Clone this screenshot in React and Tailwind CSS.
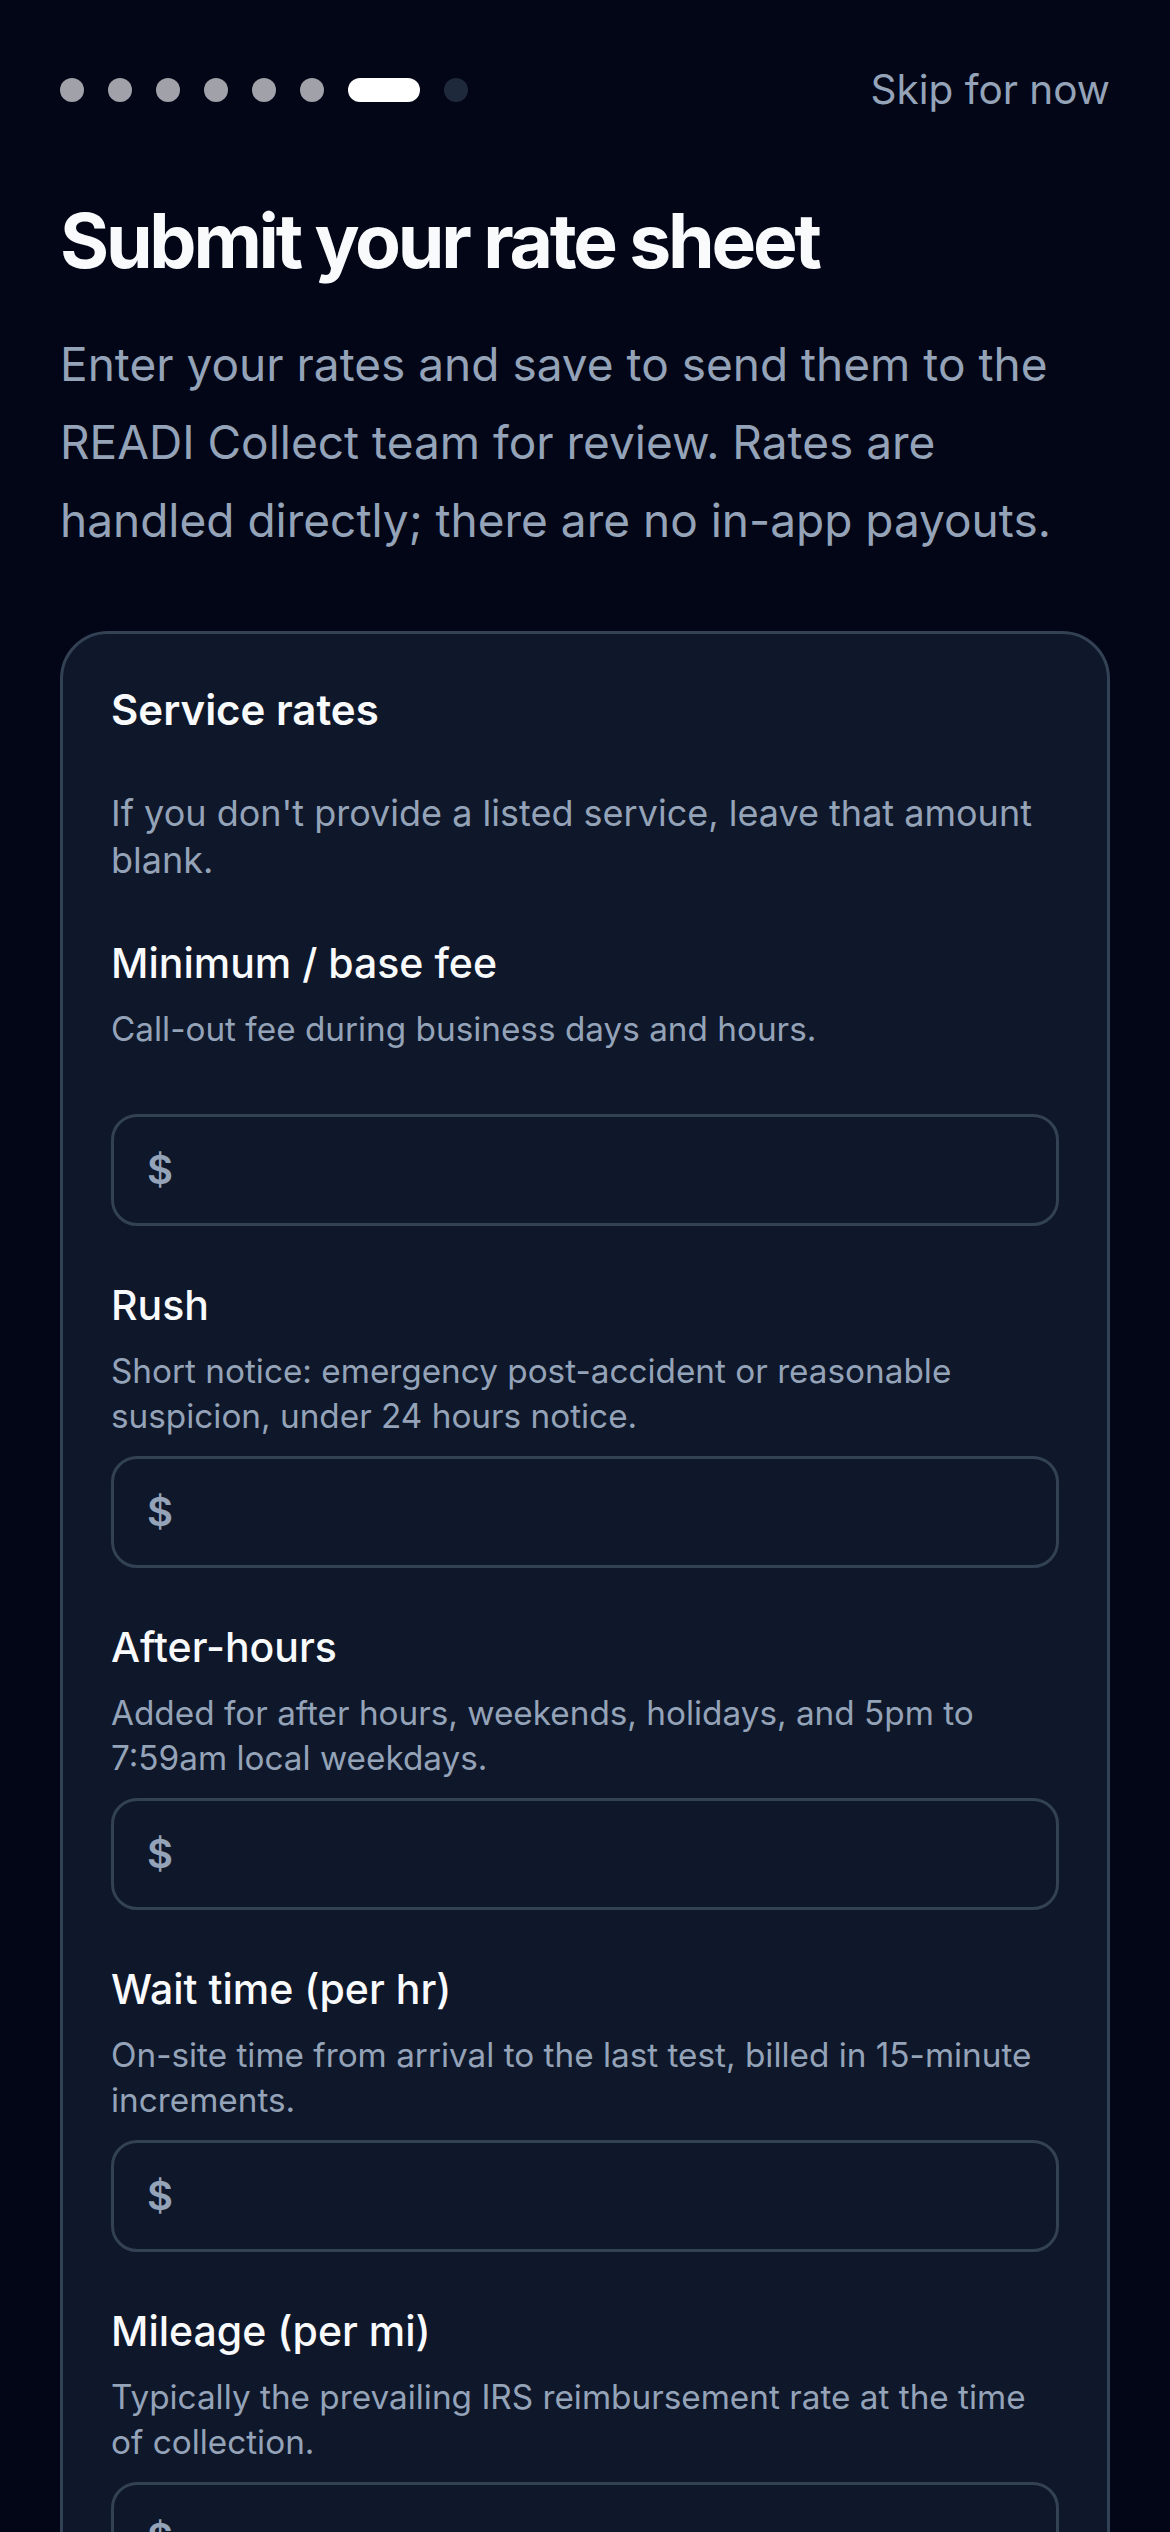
import { useState } from 'react';

const STEPS = 8;
const CURRENT = 6;

const RATE_FIELDS = [
  { key: 'base', label: 'Minimum / base fee', hint: 'Call-out fee during business days and hours.' },
  { key: 'rush', label: 'Rush', hint: 'Short notice: emergency post-accident or reasonable suspicion, under 24 hours notice.' },
  { key: 'afterHours', label: 'After-hours', hint: 'Added for after hours, weekends, holidays, and 5pm to 7:59am local weekdays.' },
  { key: 'wait', label: 'Wait time (per hr)', hint: 'On-site time from arrival to the last test, billed in 15-minute increments.' },
  { key: 'mileage', label: 'Mileage (per mi)', hint: 'Typically the prevailing IRS reimbursement rate at the time of collection.' },
];

function StepDots() {
  return (
    <div className="flex items-center gap-[24px]">
      {Array.from({ length: STEPS }).map((_, i) => {
        if (i === CURRENT) return <span key={i} className="h-[24px] w-[72px] rounded-full bg-white" />;
        return (
          <span
            key={i}
            className={`h-[24px] w-[24px] rounded-full ${i < CURRENT ? 'bg-[#a1a1aa]' : 'bg-[#1e293b]'}`}
          />
        );
      })}
    </div>
  );
}

function RateField({ label, hint, value, onChange }) {
  return (
    <div className="flex flex-col">
      <label className="text-[41px] leading-[48px] font-medium text-[#f8fafc]">{label}</label>
      {/* hint slot keeps two lines so inputs line up */}
      <p className="mt-[20px] min-h-[90px] text-[33.3px] leading-[45px] text-[#94a3b8]">{hint}</p>
      <div className="mt-[17px] flex h-[112px] items-center rounded-[26px] border-[3px] border-[#334155] bg-[#0f172a] pl-[33px] pr-[36px]">
        <span className="text-[40px] font-semibold text-[#94a3b8]">$</span>
        <input
          type="text"
          inputMode="decimal"
          value={value}
          onChange={e => onChange(e.target.value)}
          className="ml-[12px] flex-1 bg-transparent text-[40px] text-[#f8fafc] outline-none"
        />
      </div>
    </div>
  );
}

export default function App() {
  const [rates, setRates] = useState({});

  return (
    <div className="min-h-screen bg-[#020617] px-[60px] pt-[62px] pb-[80px] font-[Inter,sans-serif] antialiased">
      <div className="flex h-[56px] items-center justify-between">
        <StepDots />
        <button className="text-[40.5px] text-[#94a3b8]">Skip for now</button>
      </div>

      <h1 className="mt-[78px] text-[75px] leading-[90px] font-bold tracking-[-0.043em] text-[#f8fafc]">
        Submit your rate sheet
      </h1>
      <p className="mt-[39px] text-[46px] leading-[78px] text-[#94a3b8]">
        Enter your rates and save to send them to the
        <br />
        READI Collect team for review. Rates are
        <br />
        handled directly; there are no in-app payouts.
      </p>

      <div className="mt-[72px] rounded-[48px] border-[3px] border-[#334155] bg-[#0f172a] px-[48px] pt-[51px] pb-[56px]">
        <h2 className="text-[42px] leading-[50px] font-semibold text-[#f8fafc]">Service rates</h2>
        <p className="mt-[55px] text-[36px] leading-[47px] text-[#94a3b8]">
          If you don't provide a listed service, leave that amount blank.
        </p>
        <div className="mt-[55px] flex flex-col gap-[55px]">
          {RATE_FIELDS.map(f => (
            <RateField
              key={f.key}
              label={f.label}
              hint={f.hint}
              value={rates[f.key] || ''}
              onChange={v => setRates(prev => ({ ...prev, [f.key]: v }))}
            />
          ))}
        </div>
      </div>
    </div>
  );
}
